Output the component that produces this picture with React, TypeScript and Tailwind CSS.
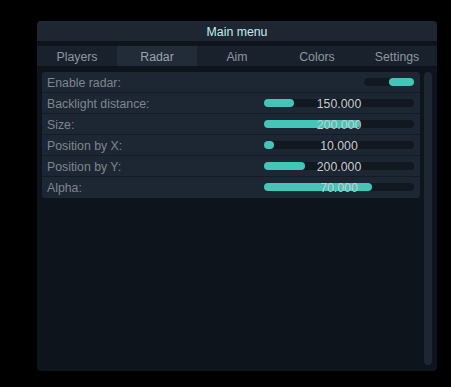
import React from "react";

const tabs = ["Players", "Radar", "Aim", "Colors", "Settings"];

const sliders = [
  { label: "Backlight distance:", value: "150.000", fill: 30 },
  { label: "Size:", value: "200.000", fill: 96 },
  { label: "Position by X:", value: "10.000", fill: 10 },
  { label: "Position by Y:", value: "200.000", fill: 41 },
  { label: "Alpha:", value: "70.000", fill: 108 },
];

export default function App() {
  return (
    <div
      className="w-[451px] h-[387px] bg-black pt-[21px] pl-[37px]"
      style={{ fontFamily: '"Liberation Sans", Arial, sans-serif' }}
    >
      <div className="w-[400px] h-[350px] rounded-[4px] bg-[#0e141c] flex flex-col overflow-hidden text-[12.3px] leading-none">
        <div className="h-[20px] bg-[#1d2631] flex items-center justify-center pt-[2px] text-[#c2eef0]">
          Main menu
        </div>
        <div className="mt-[5px] h-[20px] grid grid-cols-5 bg-[#19222c]">
          {tabs.map((t) => (
            <div
              key={t}
              className={
                t === "Radar"
                  ? "flex items-center justify-center pt-[2px] bg-[#212c38] text-[#9aa3ab]"
                  : "flex items-center justify-center pt-[2px] text-[#8e979f]"
              }
            >
              {t}
            </div>
          ))}
        </div>
        <div className="mt-[6px] flex-1 flex px-[5px] pb-[6px] gap-[4px]">
          <div className="w-[378px] self-start flex flex-col">
            <div className="h-[21px] border-b border-[#141b24] bg-[#1d2733] flex items-center pl-[5px] pt-[2px] text-[#7d868f] relative rounded-t-[3px]">
              <span>Enable radar:</span>
              <div className="absolute left-[322px] top-[6px] w-[50px] h-[8px] rounded-full bg-[#111820] flex justify-end">
                <div className="w-[25px] h-[8px] rounded-full bg-[#43c6b8]" />
              </div>
            </div>
            {sliders.map((s, i) => (
              <div
                key={s.label}
                className={
                  i === sliders.length - 1
                    ? "h-[21px] bg-[#1d2733] flex items-center pl-[5px] pt-[2px] text-[#7d868f] relative rounded-b-[3px]"
                    : "h-[21px] border-b border-[#141b24] bg-[#1d2733] flex items-center pl-[5px] pt-[2px] text-[#7d868f] relative"
                }
              >
                <span>{s.label}</span>
                <div className="absolute left-[222px] top-[6px] w-[150px] h-[8px] rounded-full bg-[#111820]">
                  <div
                    className="h-[8px] rounded-full bg-[#43c6b8]"
                    style={{ width: s.fill }}
                  />
                  <div className="absolute inset-0 flex items-center justify-center pt-[2px] text-[#c8cdd2]">
                    {s.value}
                  </div>
                </div>
              </div>
            ))}
          </div>
          <div className="w-[8px] rounded-[4px] bg-[#1d2733]" />
        </div>
      </div>
    </div>
  );
}
